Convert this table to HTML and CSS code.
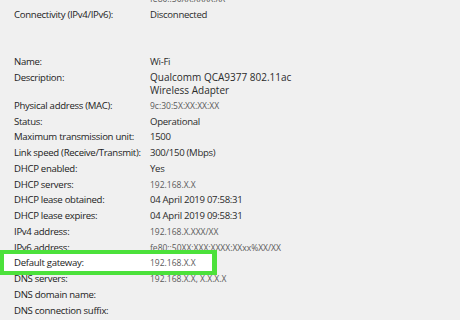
FILE: index.html
```html
<!DOCTYPE html>
<html>
<head>
<meta charset="utf-8">
<link rel="stylesheet" href="styles.css">
</head>
<body>
<div class="sheet">
  <div class="row top"><span class="label"></span><span class="value small">fe80::50XX:XXXX:XX</span></div>
  <div class="row"><span class="label">Connectivity (IPv4/IPv6):</span><span class="value">Disconnected</span></div>
  <div class="spacer"></div>
  <div class="row"><span class="label">Name:</span><span class="value">Wi-Fi</span></div>
  <div class="row multi"><span class="label">Description:</span><span class="value desc">Qualcomm QCA9377 802.11ac<br>Wireless Adapter</span></div>
  <div class="row"><span class="label">Physical address (MAC):</span><span class="value small">9c:30:5X:XX:XX:XX</span></div>
  <div class="row"><span class="label">Status:</span><span class="value">Operational</span></div>
  <div class="row"><span class="label">Maximum transmission unit:</span><span class="value">1500</span></div>
  <div class="row"><span class="label">Link speed (Receive/Transmit):</span><span class="value">300/150 (Mbps)</span></div>
  <div class="row"><span class="label">DHCP enabled:</span><span class="value">Yes</span></div>
  <div class="row"><span class="label">DHCP servers:</span><span class="value small">192.168.X.X</span></div>
  <div class="row"><span class="label">DHCP lease obtained:</span><span class="value">04 April 2019 07:58:31</span></div>
  <div class="row"><span class="label">DHCP lease expires:</span><span class="value">04 April 2019 09:58:31</span></div>
  <div class="row"><span class="label">IPv4 address:</span><span class="value small">192.168.X.XXX/XX</span></div>
  <div class="row"><span class="label">IPv6 address:</span><span class="value small">fe80::50XX:XXX:XXXX:XXxx%XX/XX</span></div>
  <div class="row highlight"><span class="label">Default gateway:</span><span class="value small">192.168.X.X</span></div>
  <div class="row"><span class="label">DNS servers:</span><span class="value small">192.168.X.X, X.X.X.X</span></div>
  <div class="row"><span class="label">DNS domain name:</span><span class="value"></span></div>
  <div class="row"><span class="label">DNS connection suffix:</span><span class="value"></span></div>
</div>
</body>
</html>
```
FILE: styles.css
```css
html, body {
  margin: 0;
  padding: 0;
  background: #f0f0f0;
}
.sheet {
  display: flow-root;
  width: 460px;
  height: 320px;
  overflow: hidden;
  font-family: "Open Sans", "Noto Sans", sans-serif;
  font-size: 9.6px;
  letter-spacing: -0.3px;
  color: #1c1c1c;
}
.row {
  display: grid;
  grid-template-columns: 136px 1fr;
  padding-left: 14px;
  height: 15.75px;
  line-height: 15.75px;
  white-space: nowrap;
}
.row.top {
  margin-top: -9px;
}
.spacer {
  height: 31.5px;
}
.row.multi {
  height: 28px;
  line-height: 13px;
  padding-top: 1.4px;
  box-sizing: border-box;
}
.value {
  color: #2b2b2b;
}
.value.desc {
  font-size: 10px;
  letter-spacing: 0;
}
.value.small {
  font-size: 8.5px;
  letter-spacing: 0;
  color: #5a5a5a;
}
.row.highlight {
  position: relative;
  isolation: isolate;
}
.row.highlight::before {
  content: "";
  position: absolute;
  z-index: -1;
  left: -1px;
  width: 218px;
  top: -5.6px;
  bottom: -3.6px;
  box-sizing: border-box;
  background: #ffffff;
  border: 4px solid #4ce13b;
  border-left-width: 5px;
  border-right-width: 5px;
}
```
